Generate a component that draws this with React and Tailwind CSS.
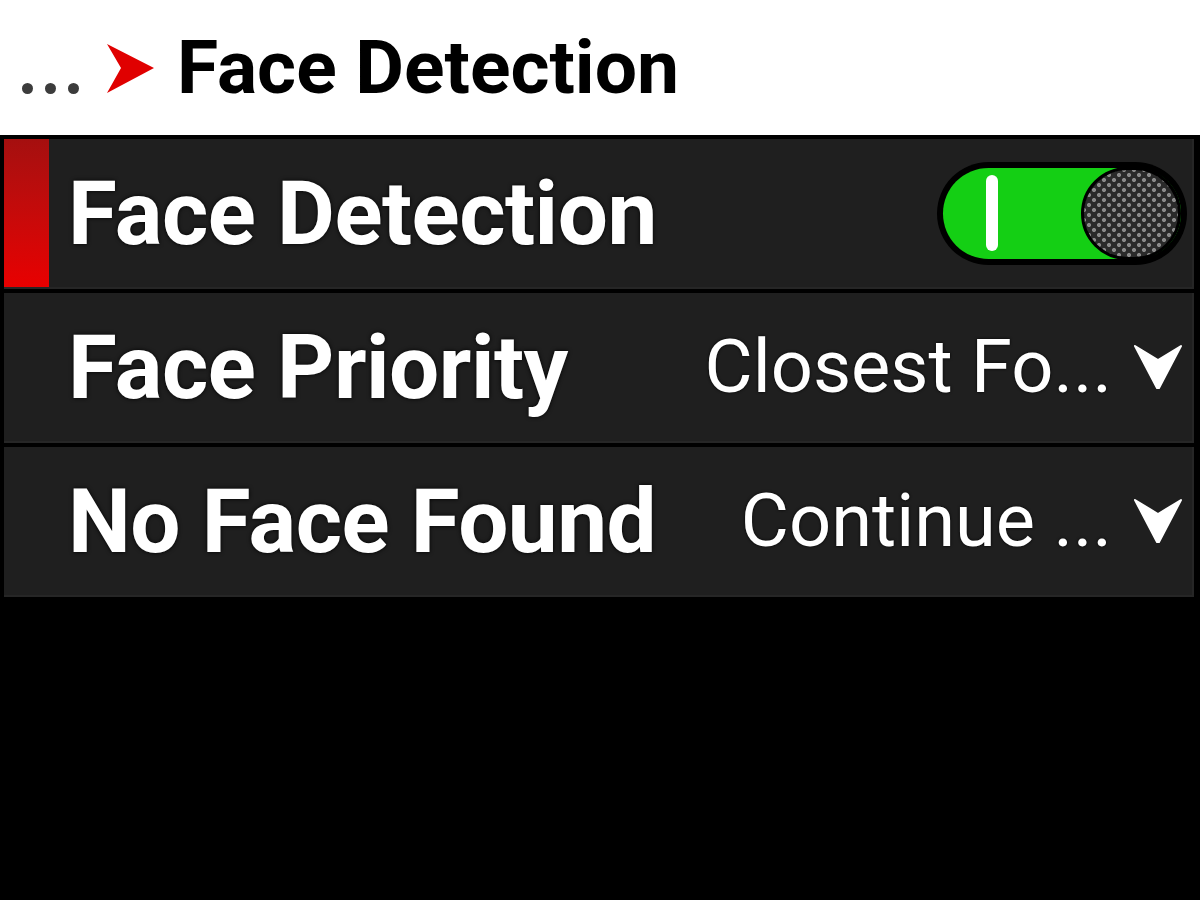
import React from "react";

const rows = [
  { label: "Face Detection", kind: "toggle", selected: true },
  { label: "Face Priority", kind: "select", value: "Closest Fo..." },
  { label: "No Face Found", kind: "select", value: "Continue ..." },
];

const Toggle = () => (
  <div className="relative w-[250px] h-[103px] rounded-full bg-black p-[6px]">
    <div className="relative h-full w-full rounded-full bg-[#14cf14]">
      <div className="absolute left-[43px] top-[7px] w-[12px] h-[76px] rounded-full bg-white" />
      <div className="absolute right-0 top-[-1px] w-[100px] h-[93px] rounded-full bg-[#2a2a2a] border-[3px] border-black bg-[radial-gradient(circle,#8a8a8a_1.6px,transparent_2.4px),radial-gradient(circle,#8a8a8a_1.6px,transparent_2.4px)] bg-[length:10px_10px] bg-[position:0_0,5px_5px]" />
    </div>
  </div>
);

const Chevron = () => (
  <svg width="48" height="46" viewBox="0 0 48 46" className="shrink-0">
    <path d="M1 2 L24 16 L47 2 L25 44 L23 44 Z" fill="white" stroke="white" strokeWidth="2" strokeLinejoin="round" />
  </svg>
);

const Row = ({ label, kind, value, selected }) => (
  <div className="flex items-center h-[150px] bg-[#1f1f1f] border-r-2 border-b-2 border-[#262626]">
    <div
      className={
        selected
          ? "w-[45px] h-full bg-gradient-to-b from-[#a50f0f] to-[#e80000]"
          : "w-[45px] h-full"
      }
    />
    <span className="ml-[19px] text-[89px] font-bold text-white leading-none tracking-[-0.5px] [text-shadow:0_0_4px_#000]">
      {label}
    </span>
    <div className="ml-auto flex items-center">
      {kind === "toggle" ? (
        <div className="mr-[5px]">
          <Toggle />
        </div>
      ) : (
        <div className="flex items-center gap-[22px] mr-[10px]">
          <span className="text-[74px] text-white leading-none [text-shadow:0_0_3px_#000]">{value}</span>
          <Chevron />
        </div>
      )}
    </div>
  </div>
);

export default function App() {
  return (
    <div className="w-[1200px] h-[900px] bg-black font-['Roboto',sans-serif] overflow-hidden">
      <header className="h-[135px] bg-white flex items-center">
        <div className="self-end flex gap-[12px] ml-[22px] mb-[41px]">
          <span className="w-[11px] h-[11px] rounded-full bg-[#3c3c3c]" />
          <span className="w-[11px] h-[11px] rounded-full bg-[#3c3c3c]" />
          <span className="w-[11px] h-[11px] rounded-full bg-[#3c3c3c]" />
        </div>
        <svg width="48" height="50" viewBox="0 0 48 50" className="ml-[28px] mt-[2px]">
          <path d="M0 0 L47 24 L0 49 L14 24 Z" fill="#e00000" />
        </svg>
        <h1 className="ml-[22px] text-[75px] font-bold text-black leading-none">Face Detection</h1>
      </header>
      <div className="flex flex-col gap-[4px] pt-[4px] pl-[4px] pr-[6px]">
        {rows.map((r) => (
          <Row key={r.label} {...r} />
        ))}
      </div>
    </div>
  );
}
